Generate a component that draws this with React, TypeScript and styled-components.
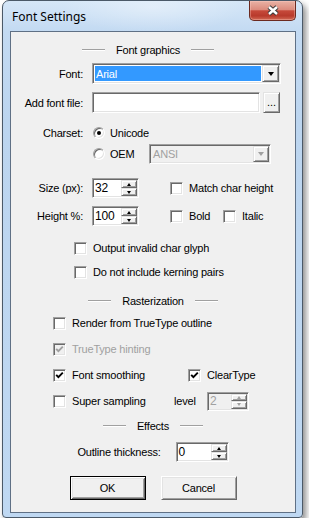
import styled, { createGlobalStyle, css } from "styled-components";

const GlobalStyle = createGlobalStyle`
  html, body {
    margin: 0;
    padding: 0;
    background: #ffffff;
  }
  body {
    font-family: "Liberation Sans", Arial, sans-serif;
    font-size: 11px;
    letter-spacing: -0.2px;
    color: #000000;
  }
`;

const sunken = css`
  box-sizing: border-box;
  border: 1px solid;
  border-color: #a0a0a0 #ffffff #ffffff #a0a0a0;
  box-shadow: inset 1px 1px 0 #696969, inset -1px -1px 0 #e3e3e3;
`;

const raised = css`
  box-sizing: border-box;
  background: #f0f0f0;
  border: 1px solid;
  border-color: #e3e3e3 #696969 #696969 #e3e3e3;
  box-shadow: inset 1px 1px 0 #ffffff, inset -1px -1px 0 #a0a0a0;
`;

function App() {
  return (
    <>
      <GlobalStyle />
      <Window>
        <TitleBar>
          <Title>Font Settings</Title>
          <CloseButton>
            <svg width="14" height="11" viewBox="0 0 14 11">
              <path d="M3 2 L11 9 M11 2 L3 9" stroke="#3a3a3a" strokeWidth="4.4" />
              <path d="M3 2 L11 9 M11 2 L3 9" stroke="#ffffff" strokeWidth="2.4" />
            </svg>
          </CloseButton>
        </TitleBar>

        <Client>
          <Section $mt={0} $shift={-5}>
            <Rule />
            <span>Font graphics</span>
            <Rule />
          </Section>

          <Row $mt={3} $h={21}>
            <Label>Font:</Label>
            <Combo $w={189} $h={21}>
              <ComboValue $selected>Arial</ComboValue>
              <DropButton>
                <Arrow />
              </DropButton>
            </Combo>
          </Row>

          <Row $mt={8} $h={21}>
            <Label>Add font file:</Label>
            <TextBox />
            <BrowseButton>...</BrowseButton>
          </Row>

          <Row $mt={10}>
            <Label>Charset:</Label>
            <Option $gap={5}>
              <Radio>
                <Dot />
              </Radio>
              Unicode
            </Option>
          </Row>

          <Row $mt={1}>
            <Label />
            <Option $gap={5} $w={57}>
              <Radio />
              OEM
            </Option>
            <Combo $w={122} $h={20} $disabled>
              <ComboValue $disabled>ANSI</ComboValue>
              <DropButton $small>
                <Arrow $color="#a0a0a0" />
              </DropButton>
            </Combo>
          </Row>

          <Row $mt={14}>
            <Label>Size (px):</Label>
            <Spin value="32" width={47} />
            <Option $ml={31}>
              <CheckBox />
              Match char height
            </Option>
          </Row>

          <Row $mt={8}>
            <Label>Height %:</Label>
            <Spin value="100" width={47} />
            <Option $ml={31} $w={53}>
              <CheckBox />
              Bold
            </Option>
            <Option>
              <CheckBox />
              Italic
            </Option>
          </Row>

          <Row $mt={12} $pl={63}>
            <Option>
              <CheckBox />
              Output invalid char glyph
            </Option>
          </Row>

          <Row $mt={4} $pl={63}>
            <Option>
              <CheckBox />
              Do not include kerning pairs
            </Option>
          </Row>

          <Section $mt={9}>
            <Rule />
            <span>Rasterization</span>
            <Rule />
          </Section>

          <Row $mt={2} $pl={42}>
            <Option>
              <CheckBox />
              Render from TrueType outline
            </Option>
          </Row>

          <Row $mt={6} $pl={42}>
            <Option $disabled>
              <CheckBox checked disabled />
              TrueType hinting
            </Option>
          </Row>

          <Row $mt={6} $pl={42}>
            <Option $w={135}>
              <CheckBox checked />
              Font smoothing
            </Option>
            <Option>
              <CheckBox checked />
              ClearType
            </Option>
          </Row>

          <Row $mt={6} $pl={42}>
            <Option $w={121}>
              <CheckBox />
              Super sampling
            </Option>
            <LevelText>level</LevelText>
            <Spin value="2" width={42} height={19} disabled />
          </Row>

          <Section $mt={5}>
            <Rule />
            <span>Effects</span>
            <Rule />
          </Section>

          <Row $mt={6} $center>
            <OutlineLabel>Outline thickness:</OutlineLabel>
            <Spin value="0" width={53} />
          </Row>

          <Row $mt={14} $h={24} $center>
            <ButtonRow>
              <PushButton $default>OK</PushButton>
              <PushButton>Cancel</PushButton>
            </ButtonRow>
          </Row>
        </Client>
      </Window>
    </>
  );
}

export default App;

function CheckBox({ checked, disabled }: { checked?: boolean; disabled?: boolean }) {
  return (
    <Box $disabled={disabled}>
      {checked && (
        <svg width="9" height="9" viewBox="0 0 9 9">
          <path
            d="M1.2 3.8 L3.4 6.2 L7.8 1.6"
            fill="none"
            stroke={disabled ? "#a0a0a0" : "#000000"}
            strokeWidth="1.9"
          />
        </svg>
      )}
    </Box>
  );
}

function Spin({
  value,
  width,
  height = 20,
  disabled,
}: {
  value: string;
  width: number;
  height?: number;
  disabled?: boolean;
}) {
  const arrow = disabled ? "#a0a0a0" : "#000000";
  return (
    <Spinner $w={width} $h={height} $disabled={disabled}>
      <SpinValue $disabled={disabled}>{value}</SpinValue>
      <SpinButtons>
        <SpinButton>
          <Arrow $up $size={5} $color={arrow} />
        </SpinButton>
        <SpinButton>
          <Arrow $size={5} $color={arrow} />
        </SpinButton>
      </SpinButtons>
    </Spinner>
  );
}

const Window = styled.div`
  box-sizing: border-box;
  width: 301px;
  height: 518px;
  margin-left: 2px;
  border: 1px solid #4b5968;
  border-radius: 7px 7px 4px 4px;
  background:
    radial-gradient(ellipse 90px 26px at 150px 6px, rgba(255, 255, 255, 0.35), transparent),
    linear-gradient(180deg, #d6e7f8 0px, #c3daf2 30px, #bcd5ef 120px, #bfd8f2 100%);
  box-shadow: 3px 4px 6px rgba(0, 0, 0, 0.45);
  display: flex;
  flex-direction: column;
`;

const TitleBar = styled.div`
  height: 30px;
  display: flex;
  justify-content: space-between;
  align-items: flex-start;
  flex-shrink: 0;
`;

const Title = styled.div`
  align-self: center;
  margin-top: 1px;
  padding-left: 9px;
  font-family: "Noto Sans", "Open Sans", sans-serif;
  font-size: 12px;
  letter-spacing: 0;
  color: #000000;
`;

const CloseButton = styled.div`
  box-sizing: border-box;
  width: 47px;
  height: 20px;
  margin-right: 6px;
  border: 1px solid #6b2a20;
  border-top: none;
  border-radius: 0 0 5px 5px;
  background: linear-gradient(
    180deg,
    #e9b2a5 0%,
    #dc8c7e 45%,
    #c6493a 52%,
    #b83a2c 78%,
    #d26a55 100%
  );
  box-shadow: inset 0 0 0 1px rgba(255, 210, 200, 0.35);
  display: flex;
  align-items: center;
  justify-content: center;
`;

const Client = styled.div`
  box-sizing: border-box;
  height: 482px;
  margin: 0 6px 0 7px;
  border: 1px solid #5f7085;
  background: #f0f0f0;
  padding-top: 8px;
  display: flex;
  flex-direction: column;
`;

const Section = styled.div<{ $mt: number; $shift?: number }>`
  height: 20px;
  margin-top: ${(p) => p.$mt}px;
  padding-right: ${(p) => -(p.$shift ?? 0) * 2}px;
  display: flex;
  align-items: center;
  justify-content: center;
  gap: 11px;
  flex-shrink: 0;
`;

const Rule = styled.span`
  width: 23px;
  height: 0;
  border-top: 1px solid #a0a0a0;
  border-bottom: 1px solid #ffffff;
`;

const Row = styled.div<{ $mt: number; $h?: number; $pl?: number; $center?: boolean }>`
  height: ${(p) => p.$h ?? 20}px;
  margin-top: ${(p) => p.$mt}px;
  padding-left: ${(p) => p.$pl ?? 0}px;
  display: flex;
  align-items: center;
  justify-content: ${(p) => (p.$center ? "center" : "flex-start")};
  flex-shrink: 0;
`;

const Label = styled.span`
  width: 72px;
  margin-right: 9px;
  text-align: right;
  white-space: nowrap;
  flex-shrink: 0;
`;

const OutlineLabel = styled.span`
  margin-right: 15px;
  white-space: nowrap;
`;

const LevelText = styled.span`
  width: 33px;
  flex-shrink: 0;
`;

const Combo = styled.div<{ $w: number; $h: number; $disabled?: boolean }>`
  ${sunken}
  width: ${(p) => p.$w}px;
  height: ${(p) => p.$h}px;
  padding: 1px;
  background: ${(p) => (p.$disabled ? "#f0f0f0" : "#ffffff")};
  display: flex;
`;

const ComboValue = styled.span<{ $selected?: boolean; $disabled?: boolean }>`
  flex: 1;
  margin: 1px;
  padding-left: 1px;
  display: flex;
  align-items: center;
  background: ${(p) => (p.$selected ? "#3399ff" : "transparent")};
  color: ${(p) => (p.$selected ? "#ffffff" : p.$disabled ? "#a0a0a0" : "#000000")};
`;

const DropButton = styled.span<{ $small?: boolean }>`
  ${raised}
  width: ${(p) => (p.$small ? 16 : 17)}px;
  display: flex;
  align-items: center;
  justify-content: center;
`;

const Arrow = styled.span<{ $up?: boolean; $size?: number; $color?: string }>`
  width: 0;
  height: 0;
  border-left: ${(p) => ((p.$size ?? 7) - 1) / 2 + 0.5}px solid transparent;
  border-right: ${(p) => ((p.$size ?? 7) - 1) / 2 + 0.5}px solid transparent;
  ${(p) =>
    p.$up
      ? css`border-bottom: ${Math.ceil((p.$size ?? 7) / 2)}px solid ${p.$color ?? "#000"};`
      : css`border-top: ${Math.ceil((p.$size ?? 7) / 2)}px solid ${p.$color ?? "#000"};`}
`;

const TextBox = styled.span`
  ${sunken}
  width: 168px;
  height: 21px;
  background: #ffffff;
`;

const BrowseButton = styled.span`
  ${raised}
  width: 17px;
  height: 21px;
  margin-left: 3px;
  display: flex;
  align-items: flex-end;
  justify-content: center;
  padding-bottom: 4px;
  letter-spacing: 0;
`;

const Option = styled.span<{ $w?: number; $ml?: number; $gap?: number; $disabled?: boolean }>`
  width: ${(p) => (p.$w ? `${p.$w}px` : "auto")};
  margin-left: ${(p) => p.$ml ?? 0}px;
  display: flex;
  align-items: center;
  gap: ${(p) => p.$gap ?? 6}px;
  color: ${(p) => (p.$disabled ? "#a0a0a0" : "#000000")};
  white-space: nowrap;
  flex-shrink: 0;
`;

const Box = styled.span<{ $disabled?: boolean }>`
  ${sunken}
  width: 13px;
  height: 13px;
  background: ${(p) => (p.$disabled ? "#f0f0f0" : "#ffffff")};
  display: flex;
  align-items: center;
  justify-content: center;
  flex-shrink: 0;
`;

const Radio = styled.span`
  box-sizing: border-box;
  width: 12px;
  height: 12px;
  margin-left: 1px;
  border-radius: 50%;
  border: 1px solid;
  border-color: #a0a0a0 #ffffff #ffffff #a0a0a0;
  box-shadow: inset 1px 1px 0 #696969, inset -1px -1px 0 #e3e3e3;
  background: #ffffff;
  display: flex;
  align-items: center;
  justify-content: center;
  flex-shrink: 0;
`;

const Dot = styled.span`
  width: 4px;
  height: 4px;
  border-radius: 50%;
  background: #000000;
`;

const Spinner = styled.div<{ $w: number; $h: number; $disabled?: boolean }>`
  ${sunken}
  width: ${(p) => p.$w}px;
  height: ${(p) => p.$h}px;
  padding: 1px;
  background: ${(p) => (p.$disabled ? "#f0f0f0" : "#ffffff")};
  display: flex;
  flex-shrink: 0;
`;

const SpinValue = styled.span<{ $disabled?: boolean }>`
  flex: 1;
  padding-left: 1px;
  display: flex;
  align-items: center;
  font-size: 12px;
  color: ${(p) => (p.$disabled ? "#a0a0a0" : "#000000")};
`;

const SpinButtons = styled.span`
  width: 16px;
  display: flex;
  flex-direction: column;
`;

const SpinButton = styled.span`
  ${raised}
  flex: 1;
  display: flex;
  align-items: center;
  justify-content: center;
`;

const ButtonRow = styled.div`
  display: flex;
  gap: 15px;
`;

const PushButton = styled.button<{ $default?: boolean }>`
  box-sizing: border-box;
  width: 76px;
  height: 24px;
  padding: 0;
  font: inherit;
  letter-spacing: inherit;
  color: #000000;
  background: #f0f0f0;
  border: 1px solid;
  ${(p) =>
    p.$default
      ? css`
          border-color: #000000;
          box-shadow: inset 1px 1px 0 #ffffff, inset -1px -1px 0 #696969,
            inset 2px 2px 0 #e3e3e3, inset -2px -2px 0 #a0a0a0;
        `
      : css`
          border-color: #ffffff #696969 #696969 #ffffff;
          box-shadow: inset 1px 1px 0 #e3e3e3, inset -1px -1px 0 #a0a0a0;
        `}
`;
